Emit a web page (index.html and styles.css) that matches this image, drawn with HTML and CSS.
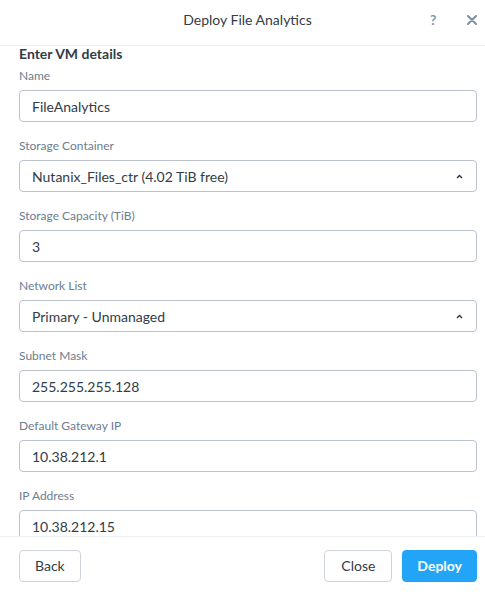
FILE: index.html
```html
<!DOCTYPE html>
<html>
<head>
<meta charset="utf-8">
<link rel="stylesheet" href="styles.css">
</head>
<body>
<div class="modal">
  <div class="header">
    <div class="title">Deploy File Analytics</div>
    <div class="icons">
      <span class="help">?</span>
      <svg class="close-x" width="10" height="10" viewBox="0 0 10 10"><path d="M1 1L9 9M9 1L1 9" stroke="#7d8ea3" stroke-width="2" stroke-linecap="round"/></svg>
    </div>
  </div>
  <div class="body">
    <div class="section-title">Enter VM details</div>
    <div class="field">
      <div class="label">Name</div>
      <div class="input">FileAnalytics</div>
    </div>
    <div class="field">
      <div class="label">Storage Container</div>
      <div class="input select"><span>Nutanix_Files_ctr (4.02 TiB free)</span><svg width="7" height="5" viewBox="0 0 7 5"><path d="M1 4L3.5 1.5L6 4" fill="none" stroke="#333" stroke-width="1.4"/></svg></div>
    </div>
    <div class="field">
      <div class="label">Storage Capacity (TiB)</div>
      <div class="input">3</div>
    </div>
    <div class="field">
      <div class="label">Network List</div>
      <div class="input select"><span>Primary - Unmanaged</span><svg width="7" height="5" viewBox="0 0 7 5"><path d="M1 4L3.5 1.5L6 4" fill="none" stroke="#333" stroke-width="1.4"/></svg></div>
    </div>
    <div class="field">
      <div class="label">Subnet Mask</div>
      <div class="input">255.255.255.128</div>
    </div>
    <div class="field">
      <div class="label">Default Gateway IP</div>
      <div class="input">10.38.212.1</div>
    </div>
    <div class="field">
      <div class="label">IP Address</div>
      <div class="input">10.38.212.15</div>
    </div>
  </div>
  <div class="footer">
    <button class="btn">Back</button>
    <div class="right">
      <button class="btn close">Close</button>
      <button class="btn primary">Deploy</button>
    </div>
  </div>
</div>
</body>
</html>
```

FILE: styles.css
```css
* { box-sizing: border-box; }
html, body { margin: 0; padding: 0; background: #fff; }
body { font-family: Lato, "Open Sans", sans-serif; color: #313c48; width: 485px; height: 598px; overflow: hidden; }
.modal { display: flex; flex-direction: column; height: 598px; }
.header { height: 46px; flex: none; display: flex; align-items: center; padding-bottom: 6px; border-bottom: 1px solid #eceff2; }
.title { flex: 1; text-align: center; padding-left: 80px; font-size: 14px; color: #313c48; }
.icons { width: 70px; display: flex; align-items: center; gap: 31px; padding-left: 15px; }
.help { font-weight: 700; font-size: 14px; color: #8596ab; }
.close-x { margin-top: 1px; }
.body { height: 490px; flex: none; overflow: hidden; padding: 0 8px 0 19px; }
.section-title { font-size: 14px; font-weight: 700; color: #313c48; height: 15px; line-height: 15px; }
.field { margin-top: 17px; }
.section-title + .field { margin-top: 8px; }
.label { font-size: 12px; color: #6c7d90; height: 14px; line-height: 14px; }
.input { margin-top: 7px; height: 32px; border: 1px solid #bcc3cf; border-radius: 4px; padding: 0 12px; display: flex; align-items: center; justify-content: space-between; font-size: 14px; color: #313c48; }
.select { padding-right: 13px; }
.footer { flex: 1; border-top: 1px solid #eceff2; display: flex; justify-content: space-between; align-items: center; padding: 0 8px 4px 19px; }
.right { display: flex; gap: 10px; }
.btn { height: 32px; padding: 0 15px; background: #fff; border: 1px solid #cfd4dc; border-radius: 4px; font-family: Lato, "Open Sans", sans-serif; font-size: 14px; color: #313c48; }
.close { padding: 0 16px; }
.primary { background: #22a5f7; border-color: #22a5f7; color: #fff; font-weight: 700; padding: 0 14px; }
```
